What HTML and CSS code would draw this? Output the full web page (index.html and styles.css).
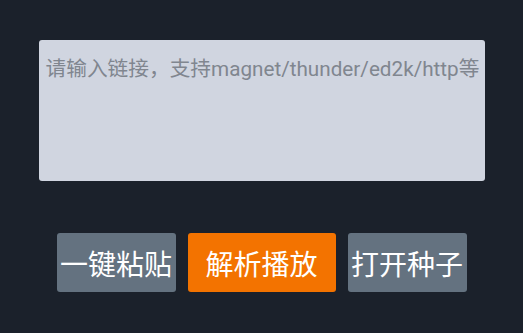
FILE: index.html
```html
<!DOCTYPE html>
<html lang="zh-CN">
  <head>
    <meta charset="UTF-8" />
    <meta name="viewport" content="width=device-width, initial-scale=1.0" />
    <title>解析播放</title>
    <link rel="stylesheet" href="styles.css">
  </head>
  <body>
    <div class="player-box">
      <textarea
        id="link"
        class="link-input"
        placeholder="请输入链接，支持magnet/thunder/ed2k/http等"
      ></textarea>
      <div class="actions">
        <button class="btn btn-gray" id="paste">一键粘贴</button>
        <button class="btn btn-main" id="play">解析播放</button>
        <button class="btn btn-gray" id="torrent">打开种子</button>
      </div>
    </div>
  </body>
</html>
```

FILE: styles.css
```css
body {
  margin: 0;
  background-color: #1b212b;
  font-family: Roboto, "Noto Sans CJK SC", sans-serif;
}
.player-box {
  display: flex;
  flex-direction: column;
  align-items: center;
  padding-top: 40px;
}
.link-input {
  box-sizing: border-box;
  width: 446px;
  height: 141px;
  padding: 12px 0 12px 7px;
  border: none;
  border-radius: 3px;
  background-color: #d0d5e0;
  color: #333;
  font-family: Roboto, "Noto Sans CJK SC", sans-serif;
  font-size: 20.7px;
  resize: none;
  outline: none;
  overflow: hidden;
}
.link-input::placeholder {
  color: #80868f;
  white-space: nowrap;
}
.actions {
  display: flex;
  gap: 12px;
  margin-top: 52px;
}
.btn {
  height: 59px;
  padding: 0;
  border: none;
  border-radius: 3px;
  color: #fff;
  font-family: "Noto Sans CJK SC", sans-serif;
  font-size: 28px;
  cursor: pointer;
}
.btn-gray {
  width: 119px;
  background-color: #647280;
}
.btn-main {
  width: 148px;
  background-color: #f37300;
}
```
